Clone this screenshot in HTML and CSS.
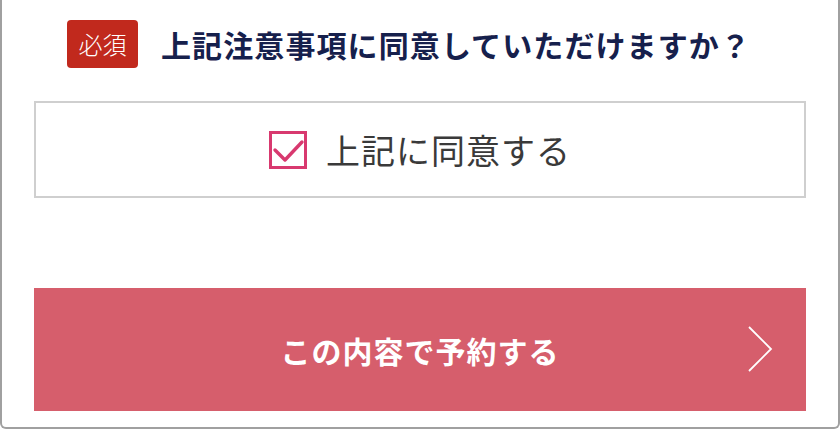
FILE: index.html
```html
<!DOCTYPE html>
<html lang="ja">
<head>
<meta charset="utf-8">
<link rel="stylesheet" href="styles.css">
</head>
<body>
<div class="page">
  <div class="question">
    <span class="badge">必須</span>
    <h2 class="title">上記注意事項に同意していただけますか？</h2>
  </div>
  <label class="agree">
    <span class="check">
      <svg viewBox="0 0 38 38" width="38" height="38" aria-hidden="true">
        <rect x="1.5" y="1.5" width="35" height="35" fill="none" stroke="#d8396f" stroke-width="3"/>
        <polyline points="6,19 16,29 33,11" fill="none" stroke="#d8396f" stroke-width="3.4" stroke-linecap="round" stroke-linejoin="round"/>
      </svg>
    </span>
    <span class="agree-text">上記に同意する</span>
  </label>
  <button class="submit" type="button">
    <span class="submit-text">この内容で予約する</span>
    <svg class="chev" viewBox="0 0 26 46" width="26" height="46" aria-hidden="true">
      <polyline points="2,1 24,23 2,45" fill="none" stroke="#ffffff" stroke-width="1.8"/>
    </svg>
  </button>
</div>
</body>
</html>
```

FILE: styles.css
```css
html, body {
  margin: 0;
  padding: 0;
  background: #ffffff;
}
body {
  font-family: "Noto Sans CJK JP", "Noto Sans", sans-serif;
}
.page {
  box-sizing: border-box;
  width: 840px;
  height: 429px;
  border-left: 2px solid #a0a0a0;
  border-right: 2px solid #a0a0a0;
  border-bottom: 2px solid #a0a0a0;
  border-radius: 0 0 6px 6px;
  padding: 20px 32px 0 32px;
  display: flex;
  flex-direction: column;
}
.question {
  display: flex;
  align-items: center;
  height: 48px;
  padding-left: 33px;
  gap: 23px;
}
.badge {
  box-sizing: border-box;
  width: 71px;
  height: 48px;
  background: #c1291d;
  color: #ffffff;
  border-radius: 4px;
  font-size: 24px;
  line-height: 48px;
  text-align: center;
  font-weight: 300;
}
.title {
  margin: 0;
  font-size: 30px;
  font-weight: 700;
  color: #16204c;
  letter-spacing: 1.1px;
  line-height: 1;
  white-space: nowrap;
}
.agree {
  box-sizing: border-box;
  margin-top: 33px;
  height: 97px;
  border: 2px solid #cfcfcf;
  display: flex;
  align-items: center;
  justify-content: center;
  gap: 19px;
}
.check {
  display: block;
  width: 38px;
  height: 38px;
}
.check svg {
  display: block;
}
.agree-text {
  font-size: 34px;
  color: #3a3a3a;
  letter-spacing: 1px;
  font-weight: 400;
  line-height: 1;
}
.submit {
  position: relative;
  margin-top: 90px;
  height: 123px;
  border: none;
  background: #d65e6c;
  color: #ffffff;
  font-family: inherit;
  display: flex;
  align-items: center;
  justify-content: center;
  padding: 0;
}
.submit-text {
  font-size: 30px;
  font-weight: 700;
  letter-spacing: 1px;
  line-height: 1;
}
.chev {
  position: absolute;
  right: 33px;
  top: 38px;
}
```
